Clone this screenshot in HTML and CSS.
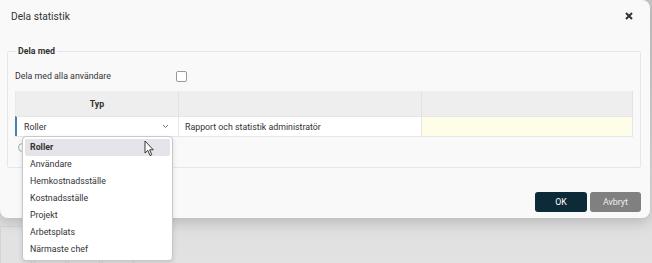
FILE: index.html
```html
<!DOCTYPE html>
<html lang="sv">
<head>
  <meta charset="UTF-8">
  <title>Dela statistik</title>
  <link rel="stylesheet" href="styles.css">
</head>
<body>
  <div class="backdrop">
    <div class="bg-grid">
      <div class="cell"></div><div class="cell"></div><div class="cell"></div><div class="cell"></div>
    </div>
  </div>

  <div class="dialog">
    <div class="dialog-head">
      <div class="title">Dela statistik</div>
      <svg class="close" width="8" height="8" viewBox="0 0 8 8"><path d="M1 1 L7 7 M7 1 L1 7" stroke="#333" stroke-width="2"/></svg>
    </div>

    <fieldset class="share">
      <legend>Dela med</legend>
      <div class="all-row">
        <span class="all-label">Dela med alla användare</span>
        <span class="checkbox"></span>
      </div>

      <div class="grid">
        <div class="th">Typ</div>
        <div class="th"></div>
        <div class="th"></div>
        <div class="td select">
          <span>Roller</span>
          <svg class="chev" width="7" height="5" viewBox="0 0 7 5"><path d="M1 1 L3.5 3.5 L6 1" fill="none" stroke="#777" stroke-width="1"/></svg>
        </div>
        <div class="td">Rapport och statistik administratör</div>
        <div class="td yellow"></div>
      </div>
      <div class="add-row"><span class="add-icon"></span></div>
    </fieldset>

    <div class="actions">
      <button class="btn ok">OK</button>
      <button class="btn cancel">Avbryt</button>
    </div>
  </div>

  <ul class="dropdown">
    <li class="active">Roller</li>
    <li>Användare</li>
    <li>Hemkostnadsställe</li>
    <li>Kostnadsställe</li>
    <li>Projekt</li>
    <li>Arbetsplats</li>
    <li>Närmaste chef</li>
  </ul>

  <svg class="cursor" width="11" height="17" viewBox="0 0 11 17">
    <path d="M1 1 L1 13 L3.8 10.4 L6 15.5 L7.8 14.7 L5.6 9.8 L9.3 9.8 Z" fill="#fff" stroke="#222" stroke-width="0.9" stroke-linejoin="round"/>
  </svg>
</body>
</html>
```

FILE: styles.css
```css
body {
  margin: 0;
  width: 652px;
  height: 263px;
  overflow: hidden;
  position: relative;
  font-family: Roboto, "Liberation Sans", Arial, sans-serif;
  font-size: 8.8px;
  color: #333;
  background: linear-gradient(#c6c7c7, #d9d9d9 55%, #e2e2e2);
}

/* bakgrund bakom dialogen */
.backdrop {
  position: absolute;
  left: 0;
  top: 218px;
  right: 0;
  bottom: 0;
}

.bg-grid {
  display: flex;
  gap: 2px;
  padding-top: 8px;
}

.cell {
  width: 30px;
  height: 40px;
  border: 1px solid #d4d4d4;
  background: #e2e2e2;
}

.dialog {
  position: relative;
  width: 650px;
  height: 218px;
  background: #f9f9f9;
  border-radius: 0 8px 8px 8px;
  box-shadow: 0 4px 14px rgba(0, 0, 0, 0.18);
  display: flex;
  flex-direction: column;
}

.dialog-head {
  display: flex;
  justify-content: space-between;
  align-items: center;
  height: 32px;
  padding: 0 17px 0 11px;
}

.title {
  font-size: 10.2px;
  color: #333;
}

.share {
  margin: 14px 11px 0 7px;
  padding: 0 7px 10px 7px;
  border: 1px solid #e6e6e6;
  border-radius: 2px;
}

.share legend {
  font-weight: bold;
  color: #333;
  padding: 0 2px;
  margin-left: 1px;
  height: 11px;
  line-height: 11px;
}

.all-row {
  display: flex;
  align-items: center;
  height: 18px;
  margin-top: 10px;
}

.all-label {
  width: 161px;
}

.checkbox {
  width: 9px;
  height: 9px;
  border: 1px solid #999;
  border-radius: 2px;
  background: #fff;
}

.grid {
  margin-top: 6px;
  display: grid;
  grid-template-columns: 163px 243px 211px;
  border-left: 1px solid #e8e8e8;
  border-bottom: 1px solid #e6e6e6;
}

.th {
  height: 25px;
  background: #eeeeee;
  border-right: 1px solid #e2e2e2;
  display: flex;
  align-items: center;
  justify-content: center;
  font-weight: bold;
}

.td {
  height: 19px;
  background: #fff;
  border-top: 1px solid #e6e6e6;
  border-right: 1px solid #e6e6e6;
  display: flex;
  align-items: center;
  padding-left: 6px;
}

.select {
  border-left: 2px solid #4a7fb5;
  margin-left: -1px;
  justify-content: space-between;
  padding-left: 7px;
  padding-right: 9px;
}

.yellow {
  background: #fefee8;
}

.add-row {
  height: 20px;
  display: flex;
  align-items: center;
  padding-left: 3px;
}

.add-icon {
  width: 7px;
  height: 7px;
  border: 1px solid #aaa;
  border-radius: 50%;
}

.actions {
  margin-top: auto;
  display: flex;
  justify-content: flex-end;
  gap: 3px;
  padding: 0 9px 6px 0;
}

.btn {
  height: 20px;
  width: 52px;
  border: none;
  border-radius: 3px;
  font-family: inherit;
  font-size: 8.8px;
}

.ok {
  background: #0c2a38;
  color: #fff;
}

.cancel {
  background: #808080;
  color: #eee;
  width: 51px;
}

/* öppen lista ovanpå tabellen */
.dropdown {
  position: absolute;
  left: 22px;
  top: 136px;
  width: 145px;
  margin: 0;
  padding: 2px;
  list-style: none;
  background: #fff;
  border: 1px solid #c8c8c8;
  border-radius: 4px;
  box-shadow: 0 2px 5px rgba(0, 0, 0, 0.12);
}

.dropdown li {
  height: 17px;
  line-height: 17px;
  padding-left: 5px;
  border-radius: 2px;
}

.dropdown li.active {
  background: #e4e4ea;
  font-weight: bold;
}

.cursor {
  position: absolute;
  left: 144px;
  top: 140px;
}
```
